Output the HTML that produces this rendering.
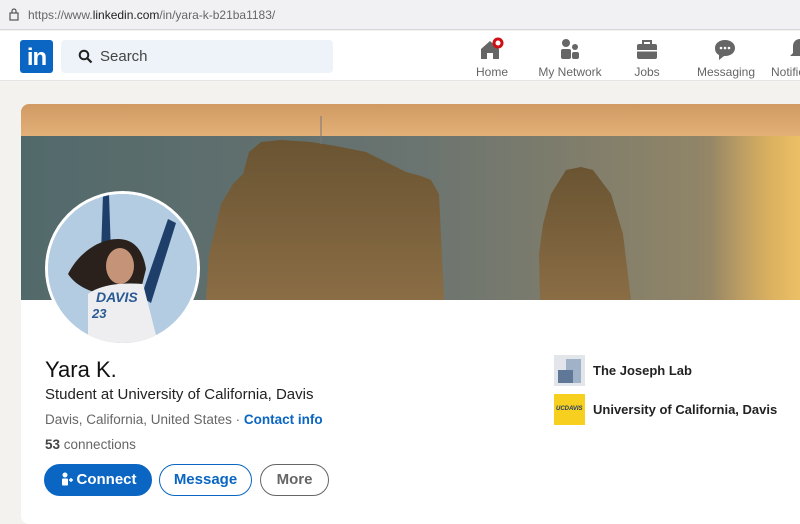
<!DOCTYPE html>
<html><head><meta charset="utf-8"><style>
*{margin:0;padding:0;box-sizing:border-box}
body{width:800px;height:515px;overflow:hidden;background:#f3f2ef;font-family:"Liberation Sans",sans-serif;position:relative}
.url{position:absolute;top:0;left:0;width:800px;height:30px;background:#f1f1f4;border-bottom:1px solid #d8d8dc;font-size:12px;color:#666;line-height:30px;padding-left:28px}
.url b{color:#222;font-weight:normal}
.nav{position:absolute;top:31px;left:0;width:800px;height:50px;background:#fff;border-bottom:1px solid #e4e4e4}
.logo{position:absolute;left:20px;top:9px;width:33px;height:33px;background:#0a66c2;border-radius:3px;color:#fff;font-weight:bold;font-size:24px;line-height:35px;text-align:center;letter-spacing:-1px}
.search{position:absolute;left:61px;top:9px;width:272px;height:33px;background:#edf3f8;border-radius:4px;font-size:15px;color:#444;line-height:33px;padding-left:39px}
.ni{position:absolute;top:5px;text-align:center;font-size:12px;color:#666;white-space:nowrap}
.ni svg{display:block;margin:0 auto 3px}
.card{position:absolute;left:21px;top:104px;width:790px;height:420px;background:#fff;border-radius:8px;overflow:hidden}
.av{position:absolute;left:45px;top:191px;width:155px;height:155px;border-radius:50%;border:3px solid #fff;overflow:hidden;background:#a9c4dd}
.name{position:absolute;left:45px;top:357px;font-size:22px;color:#111}
.hl{position:absolute;left:45px;top:386px;font-size:15px;color:#222}
.loc{position:absolute;left:45px;top:412px;font-size:13.5px;color:#666}
.loc span{color:#0a66c2;font-weight:bold}
.con{position:absolute;left:45px;top:437px;font-size:13.5px;color:#666}
.btn{position:absolute;top:464px;height:32px;border-radius:16px;font-size:15px;font-weight:bold;line-height:30px;text-align:center}
.org{position:absolute;left:554px;font-size:13px;font-weight:bold;color:#222}
.org i{position:absolute;left:0;top:0;width:31px;height:31px}
.org span{position:absolute;left:39px;top:8px;white-space:nowrap}
</style></head><body>
<div class="url"><svg style="position:absolute;left:9px;top:8px" width="10" height="13" viewBox="0 0 10 13"><rect x="1" y="5" width="8" height="7" fill="none" stroke="#555" stroke-width="1.2"/><path d="M3 5V3a2 2 0 0 1 4 0v2" fill="none" stroke="#555" stroke-width="1.2"/></svg>https://www.<b>linkedin.com</b>/in/yara-k-b21ba1183/</div>
<div class="nav">
<div class="logo">in</div>
<div class="search"><svg style="position:absolute;left:17px;top:9px" width="15" height="15" viewBox="0 0 15 15"><circle cx="6" cy="6" r="4.3" fill="none" stroke="#222" stroke-width="2"/><path d="M9 9l4.5 4.5" stroke="#222" stroke-width="2.2"/></svg>Search</div>
<div class="ni" style="left:476px;width:30px"><svg width="26" height="26" viewBox="0 0 26 26"><path d="M3 13L12 5l9 8v10h-6v-6h-6v6H3z" fill="#666"/><circle cx="20" cy="7" r="5.5" fill="#cc1016"/><circle cx="20" cy="7" r="2.5" fill="#fff"/></svg>Home</div>
<div class="ni" style="left:538px;width:64px"><svg width="26" height="26" viewBox="0 0 26 26"><circle cx="9" cy="7" r="4" fill="#666"/><rect x="4" y="13" width="10" height="10" rx="2" fill="#666"/><circle cx="18" cy="11" r="3" fill="#666"/><rect x="15" y="16" width="7" height="7" rx="2" fill="#666"/></svg>My Network</div>
<div class="ni" style="left:634px;width:26px"><svg width="26" height="26" viewBox="0 0 26 26"><rect x="3" y="8" width="20" height="15" rx="2" fill="#666"/><path d="M9 8V5h8v3" fill="none" stroke="#666" stroke-width="2"/><rect x="3" y="14" width="20" height="1.5" fill="#fff"/></svg>Jobs</div>
<div class="ni" style="left:697px;width:56px"><svg width="26" height="26" viewBox="0 0 26 26"><path d="M13 4c6 0 10 3.5 10 8s-4 8-10 8h-1l-5 4v-5c-3-1.5-4-4-4-7 0-4.5 4-8 10-8z" fill="#666"/><circle cx="9" cy="12" r="1.3" fill="#fff"/><circle cx="13" cy="12" r="1.3" fill="#fff"/><circle cx="17" cy="12" r="1.3" fill="#fff"/></svg>Messaging</div>
<div class="ni" style="left:771px;width:60px;text-align:left"><svg style="margin:0 0 3px 16px" width="26" height="26" viewBox="0 0 26 26"><path d="M13 3c4 0 7 3 7 7v7l3 3H3l3-3v-7c0-4 3-7 7-7z" fill="#666"/></svg>Notifications</div>
</div>
<div class="card">
<svg width="790" height="196" viewBox="0 0 790 196" style="display:block">
<defs>
<linearGradient id="sky" x1="0" y1="0" x2="0" y2="1"><stop offset="0" stop-color="#d19a63"/><stop offset="1" stop-color="#e2b078"/></linearGradient>
<linearGradient id="sea" x1="0" y1="0" x2="1" y2="0"><stop offset="0" stop-color="#52696b"/><stop offset=".5" stop-color="#6a7470"/><stop offset=".85" stop-color="#8f8468"/><stop offset="1" stop-color="#b5935e"/></linearGradient>
<linearGradient id="rock" x1="0" y1="0" x2="0" y2="1"><stop offset="0" stop-color="#6a5432"/><stop offset="1" stop-color="#8a6d45"/></linearGradient>
<linearGradient id="ref" x1="0" y1="0" x2="1" y2="0"><stop offset="0" stop-color="#f2c060" stop-opacity="0"/><stop offset=".6" stop-color="#f2c060" stop-opacity=".7"/><stop offset="1" stop-color="#f6cc6a" stop-opacity=".9"/></linearGradient>
</defs>
<rect width="790" height="32" fill="url(#sky)"/>
<rect y="32" width="790" height="164" fill="url(#sea)"/>
<rect x="690" y="32" width="100" height="164" fill="url(#ref)"/>
<path d="M185 196L188 150 200 100 212 80 222 70 228 48 240 38 260 36 290 38 315 42 345 48 385 68 400 72 410 76 418 90 423 196z" fill="url(#rock)"/>
<path d="M300 40V12" stroke="#777" stroke-width="1"/>
<path d="M519 196L518 150 522 120 530 90 545 66 560 63 572 66 590 90 602 130 610 196z" fill="url(#rock)"/>
</svg>
</div>
<div class="av"><svg width="149" height="149" viewBox="0 0 149 149">
<rect width="149" height="149" fill="#b3cce2"/>
<path d="M55 0l6 0 2 60-10 0z" fill="#1f3f6b"/>
<path d="M120 25l8 4-25 80-10-6z" fill="#1f3f6b"/>
<path d="M20 80c10-20 30-35 50-35 15 0 25 10 28 30l-5 20-40 5c-12-3-25-8-33-20z" fill="#2a211c"/>
<ellipse cx="72" cy="72" rx="14" ry="18" fill="#c49378"/>
<path d="M40 100c10-8 30-12 55-10l15 59H40z" fill="#eeeef0"/>
<text x="48" y="108" font-size="14" font-weight="bold" font-style="italic" fill="#2a5a94" font-family="Liberation Sans">DAVIS</text>
<text x="44" y="124" font-size="13" font-weight="bold" font-style="italic" fill="#2a5a94" font-family="Liberation Sans">23</text>
</svg></div>
<div class="name">Yara K.</div>
<div class="hl">Student at University of California, Davis</div>
<div class="loc">Davis, California, United States · <span>Contact info</span></div>
<div class="con"><b style="color:#444">53</b> connections</div>
<div class="btn" style="left:44px;width:108px;background:#0a66c2;color:#fff;border:1px solid #0a66c2"><svg style="vertical-align:-2px;margin-right:3px" width="14" height="14" viewBox="0 0 14 14"><circle cx="5" cy="3" r="2.5" fill="#fff"/><rect x="2" y="6.5" width="6" height="7" rx="1" fill="#fff"/><path d="M9 8h4M11 6v4" stroke="#fff" stroke-width="1.4"/></svg>Connect</div>
<div class="btn" style="left:159px;width:93px;border:1px solid #0a66c2;color:#0a66c2;background:#fff">Message</div>
<div class="btn" style="left:260px;width:69px;border:1px solid #666;color:#666;background:#fff">More</div>
<div class="org" style="top:355px"><i style="background:#e2e6eb"><b style="position:absolute;left:12px;top:4px;width:15px;height:24px;background:#9fb2c8"></b><b style="position:absolute;left:4px;top:15px;width:15px;height:13px;background:#5f7897"></b></i><span>The Joseph Lab</span></div>
<div class="org" style="top:394px"><i style="background:#f7cf1f"><b style="position:absolute;left:2px;top:12px;font-size:6px;color:#1d3a6b">UCDAVIS</b></i><span>University of California, Davis</span></div>
</body></html>
